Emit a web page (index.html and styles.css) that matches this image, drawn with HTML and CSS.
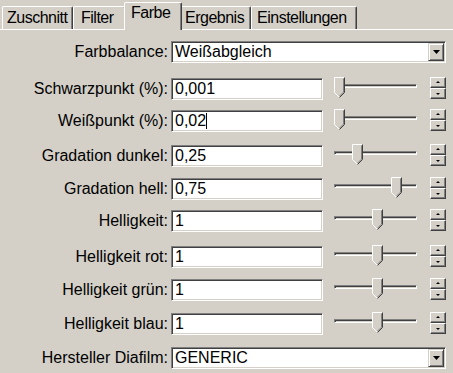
FILE: index.html
```html
<!DOCTYPE html>
<html lang="de">
<head>
  <meta charset="UTF-8" />
  <title>Farbe</title>
  <link rel="stylesheet" href="styles.css">
</head>
<body>
  <div class="window">
    <!-- Tab strip -->
    <div class="tabs">
      <div class="tab tab-zuschnitt">Zuschnitt</div>
      <div class="tab tab-filter">Filter</div>
      <div class="tab tab-farbe active">Farbe</div>
      <div class="tab tab-ergebnis">Ergebnis</div>
      <div class="tab tab-einstellungen">Einstellungen</div>
    </div>

    <!-- Farbe page -->
    <div class="panel">
      <div class="row">
        <label class="label">Farbbalance:</label>
        <div class="select">
          <span class="select-text">Weißabgleich</span>
          <span class="drop"><svg width="7" height="4" viewBox="0 0 7 4"><path d="M0 0h7L3.5 4z" fill="#000"/></svg></span>
        </div>
      </div>

      <div class="row">
        <label class="label">Schwarzpunkt (%):</label>
        <div class="field">0,001</div>
        <div class="slider"><div class="track"></div><svg class="thumb" style="left:0px" width="11" height="21" viewBox="0 0 11 21"><use href="#thumb"/></svg></div>
        <div class="spin"><div class="spin-btn up"></div><div class="spin-btn down"></div></div>
      </div>

      <div class="row">
        <label class="label">Weißpunkt (%):</label>
        <div class="field">0,02<span class="caret"></span></div>
        <div class="slider"><div class="track"></div><svg class="thumb" style="left:0px" width="11" height="21" viewBox="0 0 11 21"><use href="#thumb"/></svg></div>
        <div class="spin"><div class="spin-btn up"></div><div class="spin-btn down"></div></div>
      </div>

      <div class="row">
        <label class="label">Gradation dunkel:</label>
        <div class="field">0,25</div>
        <div class="slider"><div class="track"></div><svg class="thumb" style="left:18px" width="11" height="21" viewBox="0 0 11 21"><use href="#thumb"/></svg></div>
        <div class="spin"><div class="spin-btn up"></div><div class="spin-btn down"></div></div>
      </div>

      <div class="row">
        <label class="label">Gradation hell:</label>
        <div class="field">0,75</div>
        <div class="slider"><div class="track"></div><svg class="thumb" style="left:57px" width="11" height="21" viewBox="0 0 11 21"><use href="#thumb"/></svg></div>
        <div class="spin"><div class="spin-btn up"></div><div class="spin-btn down"></div></div>
      </div>

      <div class="row">
        <label class="label">Helligkeit:</label>
        <div class="field">1</div>
        <div class="slider"><div class="track"></div><svg class="thumb" style="left:38px" width="11" height="21" viewBox="0 0 11 21"><use href="#thumb"/></svg></div>
        <div class="spin"><div class="spin-btn up"></div><div class="spin-btn down"></div></div>
      </div>

      <div class="row">
        <label class="label">Helligkeit rot:</label>
        <div class="field">1</div>
        <div class="slider"><div class="track"></div><svg class="thumb" style="left:38px" width="11" height="21" viewBox="0 0 11 21"><use href="#thumb"/></svg></div>
        <div class="spin"><div class="spin-btn up"></div><div class="spin-btn down"></div></div>
      </div>

      <div class="row">
        <label class="label">Helligkeit grün:</label>
        <div class="field">1</div>
        <div class="slider"><div class="track"></div><svg class="thumb" style="left:38px" width="11" height="21" viewBox="0 0 11 21"><use href="#thumb"/></svg></div>
        <div class="spin"><div class="spin-btn up"></div><div class="spin-btn down"></div></div>
      </div>

      <div class="row">
        <label class="label">Helligkeit blau:</label>
        <div class="field">1</div>
        <div class="slider"><div class="track"></div><svg class="thumb" style="left:38px" width="11" height="21" viewBox="0 0 11 21"><use href="#thumb"/></svg></div>
        <div class="spin"><div class="spin-btn up"></div><div class="spin-btn down"></div></div>
      </div>

      <div class="row">
        <label class="label">Hersteller Diafilm:</label>
        <div class="select">
          <span class="select-text">GENERIC</span>
          <span class="drop"><svg width="7" height="4" viewBox="0 0 7 4"><path d="M0 0h7L3.5 4z" fill="#000"/></svg></span>
        </div>
      </div>
    </div>
  </div>

  <!-- shared slider thumb shape -->
  <svg width="0" height="0" class="defs">
    <defs>
      <g id="thumb" fill="none" stroke-width="1">
        <path d="M0.5 0.5h10v15l-5 5l-5-5z" fill="#d4d0c8"/>
        <path d="M0.5 15.5v-15h10" stroke="#fff"/>
        <path d="M0.5 15.5l5 5" stroke="#fff"/>
        <path d="M10.5 0.5v15l-5 5" stroke="#404040"/>
        <path d="M9.5 1.5v13.6l-4 4" stroke="#808080"/>
      </g>
    </defs>
  </svg>
</body>
</html>
```

FILE: styles.css
```css
body {
  margin: 0;
  background: #d4d0c8;
  font-family: 'Liberation Sans', Arial, sans-serif;
  font-size: 16px;
  color: #000;
}

.window {
  width: 453px;
  height: 373px;
  overflow: hidden;
}

/* tabs */
.tabs {
  display: flex;
  align-items: flex-end;
  height: 29px;
  padding-left: 2px;
  position: relative;
  z-index: 1;
  letter-spacing: -0.5px;
}

.tab {
  box-sizing: border-box;
  height: 23px;
  padding: 2px 0 0 5px;
  border-top: 1px solid #fff;
  border-left: 1px solid #fff;
  border-right: 1px solid #404040;
  box-shadow: inset -1px 0 #808080;
  border-radius: 2px 2px 0 0;
  background: #d4d0c8;
  white-space: nowrap;
  overflow: hidden;
}

.tab-zuschnitt { width: 71px; padding-left: 4px; }
.tab-filter { width: 53px; padding-left: 7px; }
.tab-farbe { width: 54px; padding-left: 6px; }
.tab-ergebnis { width: 71px; padding-left: 4px; }
.tab-einstellungen { width: 106px; padding-left: 5px; }

.tab.active {
  height: 28px;
  width: 58px;
  margin: 0 -2px 0 -2px;
  padding-top: 1px;
  margin-bottom: -1px;
  position: relative;
  z-index: 2;
}

/* page */
.panel {
  border-top: 1px solid #fff;
  padding-top: 11px;
  display: grid;
  grid-template-rows: 37px 32px 35px 33px 32px 36px 33px 34px 34px 22px;
}

.row {
  display: flex;
  align-items: flex-start;
  height: 22px;
}

.label {
  width: 168px;
  flex: none;
  text-align: right;
  line-height: 22px;
  white-space: nowrap;
}

.field,
.select {
  box-sizing: border-box;
  height: 22px;
  margin-left: 3px;
  background: #fff;
  border: 1px solid;
  border-color: #808080 #fff #fff #808080;
  box-shadow: inset 1px 1px #404040, inset -1px -1px #d4d0c8;
  padding: 0 0 0 3px;
  line-height: 20px;
}

.field {
  width: 152px;
}

.caret {
  display: inline-block;
  width: 1px;
  height: 16px;
  background: #000;
  vertical-align: -3px;
}

.select {
  width: 275px;
  display: flex;
  justify-content: space-between;
  padding-right: 1px;
}

.drop {
  box-sizing: border-box;
  width: 16px;
  height: 18px;
  margin-top: 1px;
  background: #d4d0c8;
  border: 1px solid;
  border-color: #d4d0c8 #404040 #404040 #d4d0c8;
  box-shadow: inset 1px 1px #fff, inset -1px -1px #808080;
  display: flex;
  align-items: center;
  justify-content: center;
}

.drop svg {
  display: block;
}

/* trackbar */
.slider {
  position: relative;
  width: 83px;
  height: 22px;
  margin-left: 11px;
}

.track {
  box-sizing: border-box;
  margin-top: 6px;
  height: 4px;
  border: 1px solid;
  border-color: #808080 #fff #fff #808080;
  box-shadow: inset 1px 1px #404040;
}

.thumb {
  position: absolute;
  top: -1px;
}

/* up/down */
.spin {
  margin-left: 13px;
  margin-top: -1px;
  width: 16px;
}

.spin-btn {
  box-sizing: border-box;
  height: 11px;
  border: 1px solid;
  border-color: #fff #404040 #404040 #fff;
  box-shadow: inset -1px -1px #808080;
  position: relative;
}

.spin-btn::after {
  content: "";
  position: absolute;
  left: 5px;
  border-left: 2px solid transparent;
  border-right: 2px solid transparent;
}

.spin-btn.up::after {
  top: 3px;
  border-bottom: 2px solid #000;
}

.spin-btn.down::after {
  top: 4px;
  border-top: 2px solid #000;
}

.defs {
  position: absolute;
}
```
